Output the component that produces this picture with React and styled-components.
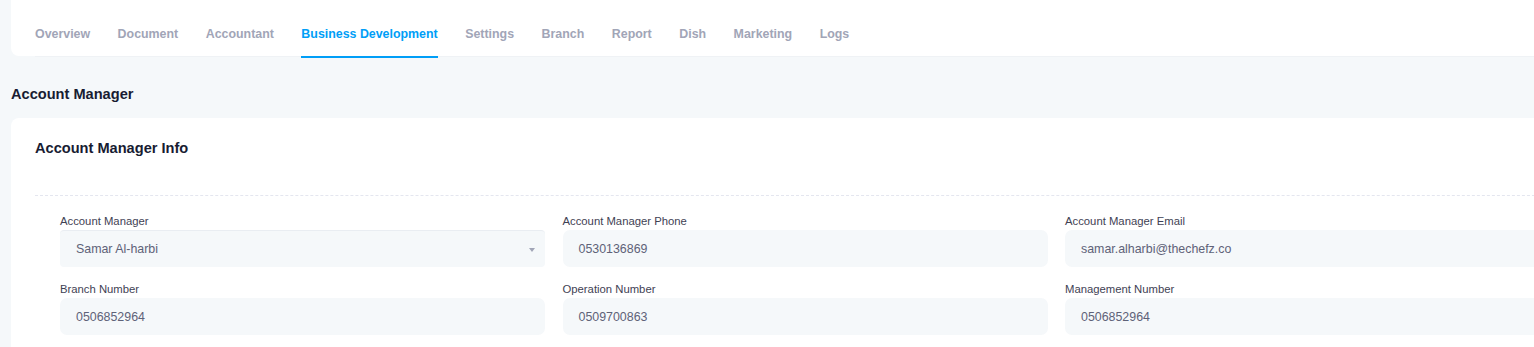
import React from "react";
import styled, { createGlobalStyle } from "styled-components";

const tabs = [
  "Overview",
  "Document",
  "Accountant",
  "Business Development",
  "Settings",
  "Branch",
  "Report",
  "Dish",
  "Marketing",
  "Logs",
];

const fields = [
  { label: "Account Manager", value: "Samar Al-harbi", select: true },
  { label: "Account Manager Phone", value: "0530136869" },
  { label: "Account Manager Email", value: "samar.alharbi@thechefz.co" },
  { label: "Branch Number", value: "0506852964" },
  { label: "Operation Number", value: "0509700863" },
  { label: "Management Number", value: "0506852964" },
];

const GlobalStyle = createGlobalStyle`
  html, body {
    margin: 0;
    padding: 0;
    overflow: hidden;
    background: #f5f8fa;
    font-family: "Liberation Sans", Arial, sans-serif;
  }
  * { box-sizing: border-box; }
`;

const Page = styled.div`
  width: 1610px;
  padding: 0 11px;
`;

const TopCard = styled.div`
  background: #fff;
  height: 56px;
  padding: 0 24px;
  border-radius: 0 0 8px 8px;
`;

const Nav = styled.nav`
  display: flex;
  gap: 27.5px;
  height: 57px;
  border-bottom: 1px solid #eff2f5;
`;

const Tab = styled.a`
  height: 58px;
  padding-top: 25px;
  line-height: 18px;
  font-size: 12.4px;
  font-weight: 700;
  white-space: nowrap;
  color: ${(p) => (p.$active ? "#009ef7" : "#a1a5b7")};
  border-bottom: 2px solid ${(p) => (p.$active ? "#009ef7" : "transparent")};
  cursor: pointer;
`;

const PageTitle = styled.h2`
  margin: 29px 0 15px;
  font-size: 14.6px;
  line-height: 18px;
  font-weight: 700;
  color: #181c32;
`;

const Card = styled.section`
  background: #fff;
  border-radius: 8px;
  padding: 0 24px 20px;
`;

const CardHeader = styled.div`
  height: 78px;
  padding-top: 21px;
  border-bottom: 1px dashed #e4e6ef;
`;

const CardTitle = styled.h3`
  margin: 0;
  font-size: 14.6px;
  line-height: 18px;
  font-weight: 700;
  color: #181c32;
`;

const FormGrid = styled.div`
  display: grid;
  grid-template-columns: repeat(3, 1fr);
  column-gap: 17.5px;
  row-gap: 15px;
  padding: 18px 25px 0;
`;

const Field = styled.div`
  display: flex;
  flex-direction: column;
  gap: 2px;
`;

const Label = styled.label`
  font-size: 11.3px;
  line-height: 14px;
  color: #3f4254;
`;

const Input = styled.div`
  position: relative;
  display: flex;
  align-items: center;
  height: 37px;
  padding: 0 16px;
  background: #f5f8fa;
  border-radius: ${(p) => (p.$select ? "4px" : "7px")};
  border-top: ${(p) => (p.$select ? "1px solid #e9edf2" : "none")};
  font-size: 12.4px;
  color: #5e6278;
`;

const Caret = styled.span`
  position: absolute;
  right: 10px;
  top: 50%;
  margin-top: -1px;
  border-left: 3px solid transparent;
  border-right: 3px solid transparent;
  border-top: 4px solid #a1a5b7;
`;

export default function App() {
  return (
    <Page>
      <GlobalStyle />
      <TopCard>
        <Nav>
          {tabs.map((t) => (
            <Tab key={t} $active={t === "Business Development"}>
              {t}
            </Tab>
          ))}
        </Nav>
      </TopCard>

      <PageTitle>Account Manager</PageTitle>

      <Card>
        <CardHeader>
          <CardTitle>Account Manager Info</CardTitle>
        </CardHeader>
        <FormGrid>
          {fields.map((f) => (
            <Field key={f.label}>
              <Label>{f.label}</Label>
              <Input $select={f.select}>
                {f.value}
                {f.select && <Caret />}
              </Input>
            </Field>
          ))}
        </FormGrid>
      </Card>
    </Page>
  );
}
